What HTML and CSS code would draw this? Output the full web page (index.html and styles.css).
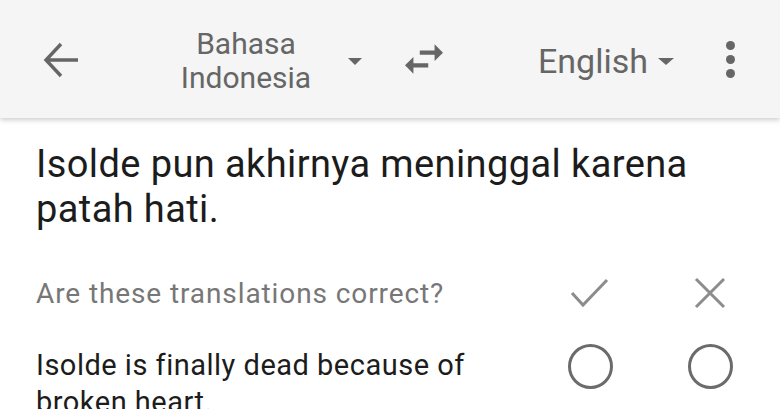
FILE: index.html
```html
<!DOCTYPE html>
<html>
<head>
<meta charset="utf-8">
<link rel="stylesheet" href="styles.css">
</head>
<body>
<header class="toolbar">
  <button class="icon-btn back" aria-label="Back">
    <svg width="36" height="36" viewBox="0 0 36 36"><path d="M3 18 H35 M18 2 L3 18 L18 34" fill="none" stroke="#666" stroke-width="3.4"/></svg>
  </button>
  <div class="lang source">
    <span class="lang-name">Bahasa<br>Indonesia</span>
    <span class="caret"></span>
  </div>
  <button class="icon-btn swap" aria-label="Swap">
    <svg width="38" height="30" viewBox="3 5 18 14"><path d="M6.99 11L3 15l3.99 4v-3H14v-2H6.99v-3zM21 9l-3.99-4v3H10v2h7.01v3L21 9z" fill="#666"/></svg>
  </button>
  <div class="lang target">
    <span class="lang-name">English</span>
    <span class="caret"></span>
  </div>
  <div class="more" aria-label="More">
    <span class="dot"></span><span class="dot"></span><span class="dot"></span>
  </div>
</header>
<main class="content">
  <p class="source-text">Isolde pun akhirnya meninggal karena patah hati.</p>
  <div class="row question">
    <span class="q-text">Are these translations correct?</span>
    <span class="cell">
      <svg width="40" height="40" viewBox="0 0 40 40"><path d="M2 19 L13 31 L37 6" fill="none" stroke="#8c8c8c" stroke-width="3"/></svg>
    </span>
    <span class="cell">
      <svg width="40" height="40" viewBox="0 0 40 40"><path d="M6 5 L34 33 M34 5 L6 33" fill="none" stroke="#8c8c8c" stroke-width="3"/></svg>
    </span>
  </div>
  <div class="row option">
    <span class="opt-text">Isolde is finally dead because of broken heart.</span>
    <span class="cell"><span class="radio"></span></span>
    <span class="cell"><span class="radio"></span></span>
  </div>
</main>
</body>
</html>
```
FILE: styles.css
```css
* { box-sizing: border-box; }
html, body { margin: 0; padding: 0; }
body {
  width: 780px;
  height: 409px;
  overflow: hidden;
  background: #fff;
  font-family: Roboto, "Noto Sans", sans-serif;
}
.toolbar {
  height: 118px;
  background: #f5f5f5;
  display: flex;
  align-items: center;
  box-shadow: 0 2px 5px rgba(0,0,0,0.2);
  position: relative;
  z-index: 1;
}
.icon-btn {
  border: 0;
  background: none;
  padding: 0;
  display: flex;
  align-items: center;
  justify-content: center;
}
.back { margin-left: 43px; margin-top: 2px; }
.lang { display: flex; align-items: center; color: #666; }
.source { margin-left: 97px; margin-top: 4px; }
.source .lang-name {
  font-size: 30px;
  line-height: 34px;
  text-align: center;
  width: 140px;
}
.source .caret { margin-left: 32px; }
.caret {
  width: 0; height: 0;
  border-left: 7px solid transparent;
  border-right: 7px solid transparent;
  border-top: 7px solid #666;
}
.swap { margin-left: 43px; margin-top: 0; }
.target { margin-left: 95px; margin-top: 4px; }
.target .lang-name { font-size: 34px; }
.target .caret {
  margin-left: 10px;
  border-left-width: 8px;
  border-right-width: 8px;
}
.more {
  margin-left: 52px;
  display: flex;
  flex-direction: column;
  gap: 5px;
}
.dot { width: 9px; height: 9px; border-radius: 50%; background: #666; }

.content { padding: 24px 0 0 36px; }
.source-text {
  margin: 0;
  font-size: 38px;
  line-height: 45px;
  letter-spacing: 0.4px;
  color: #1c1c1c;
  width: 700px;
}
.row { display: flex; align-items: center; }
.question { margin-top: 42px; height: 40px; }
.q-text {
  font-size: 28px;
  line-height: 40px;
  letter-spacing: 0.9px;
  color: #777;
  width: 494px;
}
.cell { width: 120px; display: flex; justify-content: center; }
.option { margin-top: 33px; align-items: flex-start; }
.opt-text {
  font-size: 29px;
  line-height: 37px;
  letter-spacing: 0.5px;
  color: #1c1c1c;
  width: 494px;
}
.radio {
  width: 45px; height: 45px;
  border: 3.5px solid #6b6b6b;
  border-radius: 50%;
  margin-top: -3px;
}
```
